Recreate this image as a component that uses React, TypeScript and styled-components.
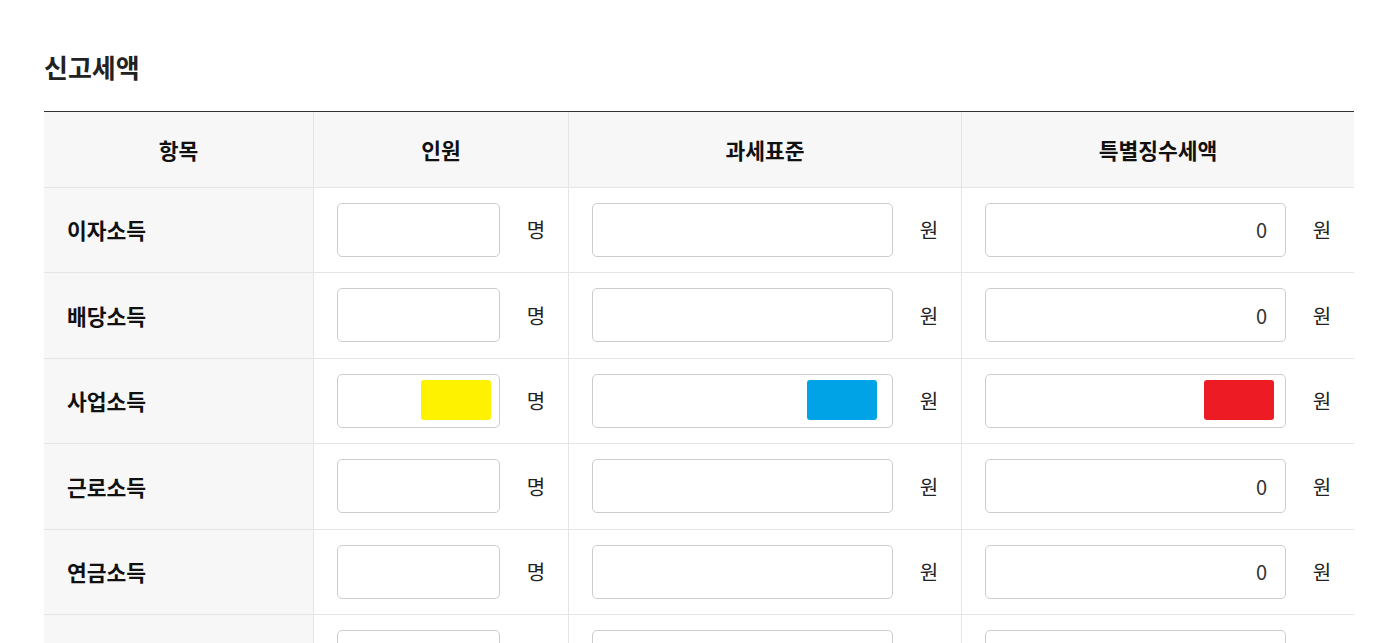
import React from "react";
import styled, { createGlobalStyle } from "styled-components";

const GlobalStyle = createGlobalStyle`
  html, body {
    margin: 0;
    padding: 0;
    background: #fff;
    font-family: "Noto Sans CJK KR", "Noto Sans", sans-serif;
    color: #111;
  }
  * {
    box-sizing: border-box;
  }
`;

const Page = styled.div`
  padding: 49px 0 0 44px;
  width: 1354px;
`;

const Title = styled.h2`
  margin: 0 0 26px;
  font-size: 26px;
  line-height: 36px;
  font-weight: 700;
  color: #222;
`;

const Table = styled.div`
  display: grid;
  grid-template-columns: 270px 255px 393px 392px;
  grid-template-rows: 75.5px;
  grid-auto-rows: 85.5px;
  border-top: 1px solid #333;
  width: 1310px;
`;

const Cell = styled.div<{ $head?: boolean; $last?: boolean }>`
  display: flex;
  align-items: center;
  justify-content: ${(p) => (p.$head ? "center" : "flex-start")};
  border-bottom: 1px solid #e5e5e5;
  border-right: ${(p) => (p.$last ? "none" : "1px solid #e5e5e5")};
  background: ${(p) => (p.$head ? "#f7f7f7" : "#fff")};
  font-size: ${(p) => (p.$head ? "21.5px" : "20px")};
  font-weight: ${(p) => (p.$head ? 700 : 400)};
  color: #111;
  padding: ${(p) => (p.$head ? "0" : "0 0 0 23px")};
`;

const LabelCell = styled(Cell)`
  background: #f7f7f7;
  font-weight: 700;
  font-size: 21.5px;
  padding-left: 23px;
`;

const InputBox = styled.div`
  position: relative;
  flex: 1;
  height: 54px;
  border: 1px solid #cccccc;
  border-radius: 5px;
  background: #fff;
  display: flex;
  align-items: center;
  justify-content: flex-end;
  padding-right: 18px;
  font-size: 20px;
  color: #333;
`;

const Mask = styled.span<{ $color: string; $right: number }>`
  position: absolute;
  top: 5px;
  right: ${(p) => p.$right}px;
  width: 70px;
  height: 40px;
  border-radius: 3px;
  background: ${(p) => p.$color};
`;

const Unit = styled.span`
  width: 68px;
  padding-left: 4px;
  text-align: center;
  font-size: 20px;
  color: #222;
`;

type Row = {
  label: string;
  tax: string;
  unit?: boolean;
  masks?: [string, string, string];
};

const rows: Row[] = [
  { label: "이자소득", tax: "0", unit: true },
  { label: "배당소득", tax: "0", unit: true },
  {
    label: "사업소득",
    tax: "",
    unit: true,
    masks: ["#fff200", "#00a4e6", "#ed1c24"],
  },
  { label: "근로소득", tax: "0", unit: true },
  { label: "연금소득", tax: "0", unit: true },
  // last row is cut off by the window, only the boxes' tops show
  { label: "", tax: "" },
];

const maskRight = [8, 15, 11];

const Field: React.FC<{ value?: string; mask?: string; idx: number }> = ({
  value,
  mask,
  idx,
}) => (
  <InputBox>
    {value}
    {mask && <Mask $color={mask} $right={maskRight[idx]} />}
  </InputBox>
);

export default function App() {
  return (
    <Page>
      <GlobalStyle />
      <Title>신고세액</Title>
      <Table>
        <Cell $head>항목</Cell>
        <Cell $head>인원</Cell>
        <Cell $head>과세표준</Cell>
        <Cell $head $last>
          특별징수세액
        </Cell>
        {rows.map((r, i) => (
          <React.Fragment key={i}>
            <LabelCell>{r.label}</LabelCell>
            <Cell>
              <Field idx={0} mask={r.masks?.[0]} />
              <Unit>{r.unit ? "명" : ""}</Unit>
            </Cell>
            <Cell>
              <Field idx={1} mask={r.masks?.[1]} />
              <Unit>{r.unit ? "원" : ""}</Unit>
            </Cell>
            <Cell $last>
              <Field idx={2} value={r.tax} mask={r.masks?.[2]} />
              <Unit>{r.unit ? "원" : ""}</Unit>
            </Cell>
          </React.Fragment>
        ))}
      </Table>
    </Page>
  );
}
